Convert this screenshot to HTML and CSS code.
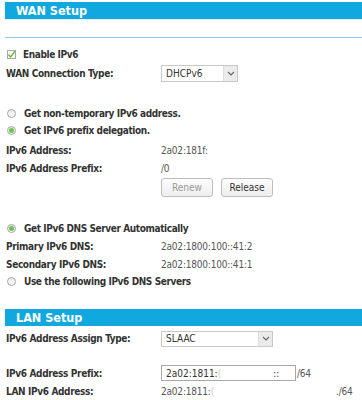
FILE: index.html
```html
<!DOCTYPE html>
<html>
<head>
    <title>IPv6 | Advanced</title>
    <link rel="stylesheet" href="styles.css">
</head>
<body>
    <div class="panel">
        <div class="bar">WAN Setup</div>
        <div class="rule"></div>

        <div class="row row-check">
            <span class="check"><svg width="9" height="9" viewBox="0 0 9 9"><path d="M1.5 4.5 L3.6 7 L8 1.2" fill="none" stroke="#5cb82e" stroke-width="1.3"/></svg></span>
            <span class="opt">Enable IPv6</span>
        </div>
        <div class="row row-type">
            <span class="label">WAN Connection Type:</span>
            <span class="select sel-wan"><span class="sel-text">DHCPv6</span><span class="sel-arrow"><svg width="8" height="5" viewBox="0 0 8 5"><path d="M1 1 L4 4 L7 1" fill="none" stroke="#666" stroke-width="1.2"/></svg></span></span>
        </div>

        <div class="row row-radio1">
            <span class="radio"></span>
            <span class="opt">Get non-temporary IPv6 address.</span>
        </div>
        <div class="row row-radio">
            <span class="radio on"></span>
            <span class="opt">Get IPv6 prefix delegation.</span>
        </div>
        <div class="row row-addr">
            <span class="label">IPv6 Address:</span>
            <span class="value">2a02:181f:</span>
        </div>
        <div class="row">
            <span class="label">IPv6 Address Prefix:</span>
            <span class="value">/0</span>
        </div>
        <div class="buttons">
            <button class="btn btn-off">Renew</button>
            <button class="btn">Release</button>
        </div>

        <div class="row row-dns">
            <span class="radio on"></span>
            <span class="opt">Get IPv6 DNS Server Automatically</span>
        </div>
        <div class="row">
            <span class="label">Primary IPv6 DNS:</span>
            <span class="value">2a02:1800:100::41:2</span>
        </div>
        <div class="row">
            <span class="label">Secondary IPv6 DNS:</span>
            <span class="value">2a02:1800:100::41:1</span>
        </div>
        <div class="row row-radio">
            <span class="radio"></span>
            <span class="opt">Use the following IPv6 DNS Servers</span>
        </div>

        <div class="bar bar-lan">LAN Setup</div>
        <div class="row row-assign">
            <span class="label">IPv6 Address Assign Type:</span>
            <span class="select sel-lan"><span class="sel-text">SLAAC</span><span class="sel-arrow"><svg width="8" height="5" viewBox="0 0 8 5"><path d="M1 1 L4 4 L7 1" fill="none" stroke="#666" stroke-width="1.2"/></svg></span></span>
        </div>
        <div class="row row-prefix">
            <span class="label">IPv6 Address Prefix:</span>
            <span class="input"><span>2a02:1811:<span class="faint">(</span></span><span class="colons">::</span></span>
            <span class="value suffix">/64</span>
        </div>
        <div class="row">
            <span class="label">LAN IPv6 Address:</span>
            <span class="value lan-addr">2a02:1811:<span class="faint">(</span></span>
            <span class="value">./64</span>
        </div>
    </div>
</body>
</html>
```

FILE: styles.css
```css
body { margin: 0; background: #fff; font-family: "DejaVu Sans Condensed", "DejaVu Sans", sans-serif; font-size: 10px; color: #333; }
.panel { width: 362px; height: 400px; overflow: hidden; }

.bar {
    margin: 2px 0 0 5px;
    height: 17px;
    line-height: 17px;
    padding-left: 11px;
    background-color: #11a8df;
    color: #fff;
    font-size: 12.5px;
    font-weight: bold;
    border-bottom: 1px solid #e4eef4;
}
.bar-lan { margin-top: 19px; border-bottom: none; }
.rule { margin: 17px 0 0 5px; border-top: 1px solid #8ccbec; }

.row { display: flex; align-items: center; height: 18px; padding-left: 6px; }
.label { width: 155px; flex: none; font-weight: bold; letter-spacing: -0.35px; color: #333; }
.opt { font-weight: bold; letter-spacing: -0.4px; color: #333; }
.value { color: #555; letter-spacing: -0.2px; }

.row-check { margin-top: 7px; }
.row-type { margin-top: 1px; }
.row-radio1 { margin-top: 22px; }
.row-radio { margin-top: -1px; }
.row-addr { margin-top: 2px; }
.row-dns { margin-top: 22px; }
.row-assign { margin-top: 4px; height: 17px; }
.row-prefix { margin-top: 17px; }

.check {
    width: 9px;
    height: 9px;
    margin: 0 7px 0 1px;
    border: 1px solid #a9a9a9;
    background: #fafafa;
    box-sizing: border-box;
    display: flex;
    align-items: center;
    justify-content: center;
}
.check svg { flex: none; }

.radio {
    width: 9px;
    height: 9px;
    margin: 0 8px 0 1px;
    border: 1px solid #a8a8a8;
    border-radius: 50%;
    background: linear-gradient(#e8e8e8, #fdfdfd);
    box-sizing: border-box;
    position: relative;
}
.radio.on::after {
    content: "";
    position: absolute;
    left: 1px;
    top: 1px;
    width: 5px;
    height: 5px;
    border-radius: 50%;
    background: #6ac54a;
}

.select {
    display: flex;
    height: 17px;
    border: 1px solid #c8c8c8;
    box-sizing: border-box;
    background: #fff;
    color: #333;
}
.sel-wan { width: 77px; }
.sel-lan { width: 112px; height: 16px; }
.sel-text { flex: 1; padding-left: 4px; line-height: 15px; }
.sel-lan .sel-text { line-height: 14px; }
.sel-arrow {
    width: 13px;
    background: #ebebeb;
    border-left: 1px solid #ddd;
    display: flex;
    align-items: center;
    justify-content: center;
}

.buttons { display: flex; gap: 8px; padding-left: 161px; margin-top: 1px; }
.btn {
    width: 52px;
    height: 19px;
    padding: 0;
    border: 1px solid #bdbdbd;
    border-radius: 3px;
    background: linear-gradient(#fdfdfd, #eeeeee);
    font-family: "DejaVu Sans Condensed", "DejaVu Sans", sans-serif;
    font-size: 10px;
    color: #333;
}
.btn-off { color: #999; }

.input {
    display: flex;
    width: 135px;
    height: 16px;
    border: 1px solid #a8a8a8;
    box-sizing: border-box;
    padding-left: 4px;
    align-items: center;
    color: #333;
}
.colons { margin-left: 52px; }
.suffix { margin-left: 1px; }
.faint { color: #ccc; }
.lan-addr { width: 175px; }
```
